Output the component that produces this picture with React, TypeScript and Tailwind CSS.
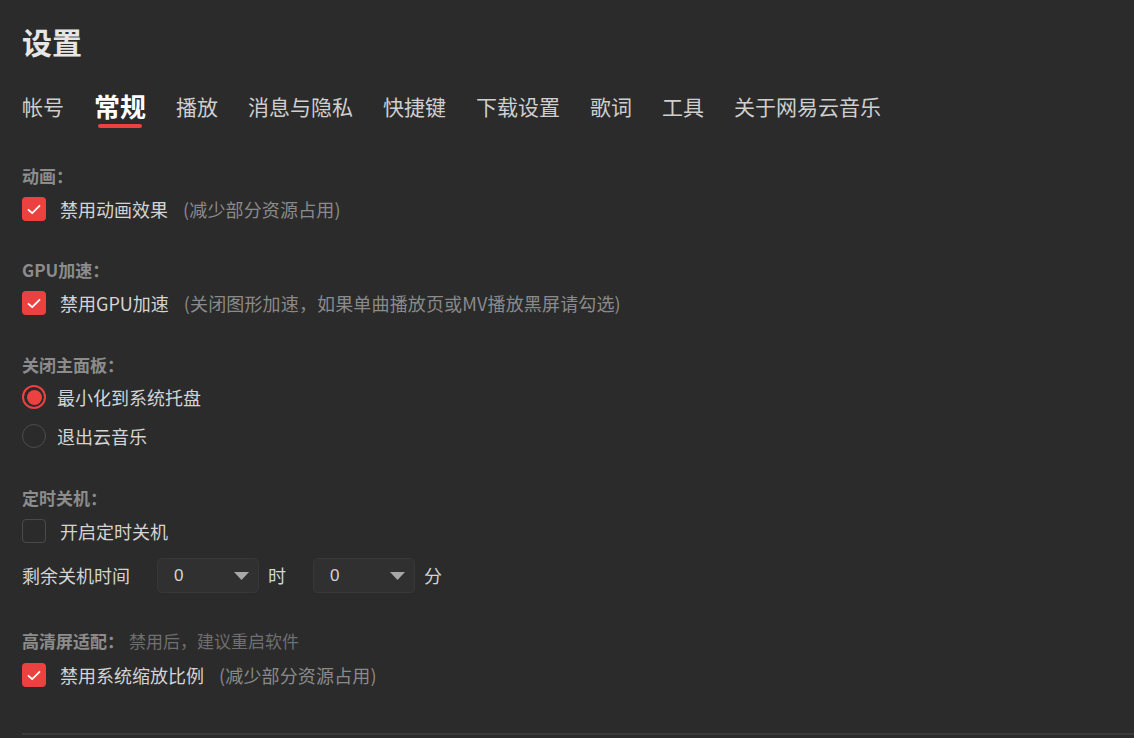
import type { ReactNode } from 'react';

const FONT = '"Noto Sans CJK SC", "Noto Sans", sans-serif';

const TABS = ['帐号', '常规', '播放', '消息与隐私', '快捷键', '下载设置', '歌词', '工具', '关于网易云音乐'];

function Check({ checked }: { checked: boolean }) {
  if (!checked) {
    return <div className="h-6 w-6 shrink-0 rounded-[4px] border-[1.5px] border-[#4a4a4a]" />;
  }
  return (
    <div className="grid h-6 w-6 shrink-0 place-items-center rounded-[4px] bg-[#ec4141]">
      <svg width="14" height="11" viewBox="0 0 14 11" fill="none">
        <path d="M1.5 5.8 L5.2 9.2 L12.5 1.8" stroke="#fff" strokeWidth="1.8" strokeLinecap="round" strokeLinejoin="round" />
      </svg>
    </div>
  );
}

function Radio({ checked }: { checked: boolean }) {
  if (!checked) {
    return <div className="h-6 w-6 shrink-0 rounded-full border-[1.5px] border-[#4d4d4d]" />;
  }
  return (
    <div className="grid h-6 w-6 shrink-0 place-items-center rounded-full border-2 border-[#ec4141]">
      <div className="h-[15px] w-[15px] rounded-full bg-[#ec4141]" />
    </div>
  );
}

function Label({ children }: { children: ReactNode }) {
  return <div className="h-5 text-[17px] leading-5 font-bold text-[#8c8c8c]">{children}</div>;
}

function CheckRow({ checked, text, hint }: { checked: boolean; text: string; hint?: string }) {
  return (
    <div className="flex h-6 items-center">
      <Check checked={checked} />
      <span className="ml-[14px] text-[18px] leading-6 text-[#d4d4d4]">{text}</span>
      {hint && <span className="ml-[15px] text-[18px] leading-6 tracking-[0.15px] text-[#8a8a8a]">{hint}</span>}
    </div>
  );
}

function RadioRow({ checked, text }: { checked: boolean; text: string }) {
  return (
    <div className="flex h-6 items-center">
      <Radio checked={checked} />
      <span className="ml-[11px] text-[18px] leading-6 text-[#d4d4d4]">{text}</span>
    </div>
  );
}

function Select({ value }: { value: string }) {
  return (
    <div className="flex h-[35px] w-[102px] items-center justify-between rounded-[5px] border border-[#383838] bg-[#303030] pl-4 pr-[9px]">
      <span className="text-[17px] text-[#d4d4d4]" style={{ fontFamily: '"Liberation Sans", sans-serif' }}>{value}</span>
      <svg width="15" height="8" viewBox="0 0 15 8">
        <path d="M0 0 H15 L7.5 8 Z" fill="#a8a8a8" />
      </svg>
    </div>
  );
}

export default function App() {
  return (
    <div className="h-[738px] w-[1134px] overflow-hidden bg-[#2b2b2b]" style={{ fontFamily: FONT }}>
      <div className="pl-[22px] pt-[26px]">
        <h1 className="h-[30px] text-[30px] leading-[30px] font-bold text-[#e6e6e6]">设置</h1>

        <nav className="mt-[35px] flex items-start gap-[30px]">
          {TABS.map((t) =>
            t === '常规' ? (
              <div key={t} className="flex flex-col items-center">
                <span className="h-[30px] text-[26px] leading-[30px] font-bold text-white">{t}</span>
                <div className="mt-[3px] h-1 w-[44px] rounded-full bg-[#ec4141]" />
              </div>
            ) : (
              <span key={t} className="h-[30px] text-[21px] leading-[30px] text-[#cfcfcf]">{t}</span>
            )
          )}
        </nav>

        <section className="mt-[38px]">
          <Label>动画：</Label>
          <div className="mt-[11px]">
            <CheckRow checked text="禁用动画效果" hint="(减少部分资源占用)" />
          </div>
        </section>

        <section className="mt-[39px]">
          <Label>GPU加速：</Label>
          <div className="mt-[11px]">
            <CheckRow checked text="禁用GPU加速" hint="(关闭图形加速，如果单曲播放页或MV播放黑屏请勾选)" />
          </div>
        </section>

        <section className="mt-[40px]">
          <Label>关闭主面板：</Label>
          <div className="mt-[10px] flex flex-col gap-[15px]">
            <RadioRow checked text="最小化到系统托盘" />
            <RadioRow checked={false} text="退出云音乐" />
          </div>
        </section>

        <section className="mt-[40px]">
          <Label>定时关机：</Label>
          <div className="mt-[11px]">
            <CheckRow checked={false} text="开启定时关机" />
          </div>
          <div className="mt-[15px] flex items-center">
            <span className="w-[135px] text-[18px] text-[#d4d4d4]">剩余关机时间</span>
            <Select value="0" />
            <span className="ml-[9px] text-[18px] text-[#d4d4d4]">时</span>
            <div className="ml-[27px]">
              <Select value="0" />
            </div>
            <span className="ml-[9px] text-[18px] text-[#d4d4d4]">分</span>
          </div>
        </section>

        <section className="mt-[38px]">
          <div className="flex h-5 items-center text-[17px] leading-5">
            <span className="font-bold text-[#8c8c8c]">高清屏适配：</span>
            <span className="ml-[5px] text-[#6f6f6f]">禁用后，建议重启软件</span>
          </div>
          <div className="mt-[12px]">
            <CheckRow checked text="禁用系统缩放比例" hint="(减少部分资源占用)" />
          </div>
        </section>

        <div className="mt-[46px] h-[2px] bg-[#3a3a3a]" />
      </div>
    </div>
  );
}
